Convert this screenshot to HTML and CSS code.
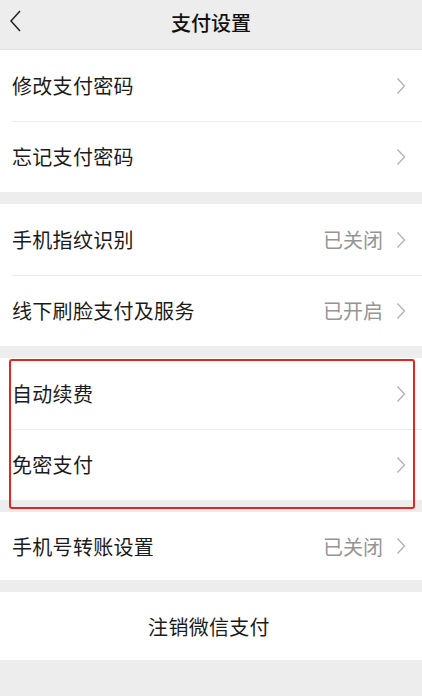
FILE: index.html
```html
<!DOCTYPE html>
<html lang="zh-CN">
<head>
<meta charset="utf-8">
<link rel="stylesheet" href="styles.css">
</head>
<body>
<div class="page">
  <header class="nav">
    <svg class="back" width="14" height="24" viewBox="0 0 14 24"><path d="M12 2 L3 12 L12 22" fill="none" stroke="#222" stroke-width="1.5"/></svg>
    <div class="title">支付设置</div>
  </header>
  <section class="group">
    <div class="row"><span class="label">修改支付密码</span><span class="right"><svg class="chev" width="10" height="18" viewBox="0 0 10 18"><path d="M1.5 1.5 L8.5 9 L1.5 16.5" fill="none" stroke="#b4b4b4" stroke-width="1.4"/></svg></span></div>
    <div class="row"><span class="label">忘记支付密码</span><span class="right"><svg class="chev" width="10" height="18" viewBox="0 0 10 18"><path d="M1.5 1.5 L8.5 9 L1.5 16.5" fill="none" stroke="#b4b4b4" stroke-width="1.4"/></svg></span></div>
  </section>
  <section class="group">
    <div class="row"><span class="label">手机指纹识别</span><span class="right"><span class="value">已关闭</span><svg class="chev" width="10" height="18" viewBox="0 0 10 18"><path d="M1.5 1.5 L8.5 9 L1.5 16.5" fill="none" stroke="#b4b4b4" stroke-width="1.4"/></svg></span></div>
    <div class="row"><span class="label">线下刷脸支付及服务</span><span class="right"><span class="value">已开启</span><svg class="chev" width="10" height="18" viewBox="0 0 10 18"><path d="M1.5 1.5 L8.5 9 L1.5 16.5" fill="none" stroke="#b4b4b4" stroke-width="1.4"/></svg></span></div>
  </section>
  <section class="group">
    <div class="row"><span class="label">自动续费</span><span class="right"><svg class="chev" width="10" height="18" viewBox="0 0 10 18"><path d="M1.5 1.5 L8.5 9 L1.5 16.5" fill="none" stroke="#b4b4b4" stroke-width="1.4"/></svg></span></div>
    <div class="row"><span class="label">免密支付</span><span class="right"><svg class="chev" width="10" height="18" viewBox="0 0 10 18"><path d="M1.5 1.5 L8.5 9 L1.5 16.5" fill="none" stroke="#b4b4b4" stroke-width="1.4"/></svg></span></div>
    <div class="redbox"></div>
  </section>
  <section class="group">
    <div class="row short"><span class="label">手机号转账设置</span><span class="right"><span class="value">已关闭</span><svg class="chev" width="10" height="18" viewBox="0 0 10 18"><path d="M1.5 1.5 L8.5 9 L1.5 16.5" fill="none" stroke="#b4b4b4" stroke-width="1.4"/></svg></span></div>
  </section>
  <section class="group">
    <div class="row center short"><span class="label">注销微信支付</span></div>
  </section>
</div>
</body>
</html>
```
FILE: styles.css
```css
html, body {
  margin: 0;
  padding: 0;
  background: #ededed;
}
body {
  font-family: "Noto Sans CJK SC", "Noto Sans", sans-serif;
  color: #1b1b1b;
  width: 422px;
  height: 696px;
  overflow: hidden;
}
.page {
  display: flex;
  flex-direction: column;
  gap: 12px;
}
.nav {
  height: 50px;
  background: #ededed;
  display: flex;
  align-items: center;
  justify-content: center;
  position: relative;
  margin-bottom: -12px;
  border-bottom: 1px solid #e2e2e2;
  box-sizing: border-box;
  padding-bottom: 4px;
}
.back {
  position: absolute;
  left: 8px;
  top: 9px;
}
.title {
  font-size: 20px;
  font-weight: 500;
  color: #111;
}
.group {
  background: #fff;
  position: relative;
}
.row {
  height: 71px;
  display: flex;
  align-items: center;
  justify-content: space-between;
  padding: 0 16px 0 12px;
  position: relative;
}
.row.short {
  height: 68px;
}
.row + .row::before {
  content: "";
  position: absolute;
  left: 12px;
  right: 0;
  top: 0;
  height: 1px;
  background: #ececec;
}
.label {
  font-size: 20px;
  letter-spacing: 0.3px;
}
.right {
  display: flex;
  align-items: center;
  gap: 13px;
}
.value {
  font-size: 20px;
  color: #959595;
}
.chev {
  display: block;
}
.row.center {
  justify-content: center;
}
.redbox {
  position: absolute;
  left: 9px;
  top: 1px;
  width: 406px;
  height: 150px;
  border: 2.5px solid #e3261f;
  border-radius: 3px;
  box-sizing: border-box;
}
```
